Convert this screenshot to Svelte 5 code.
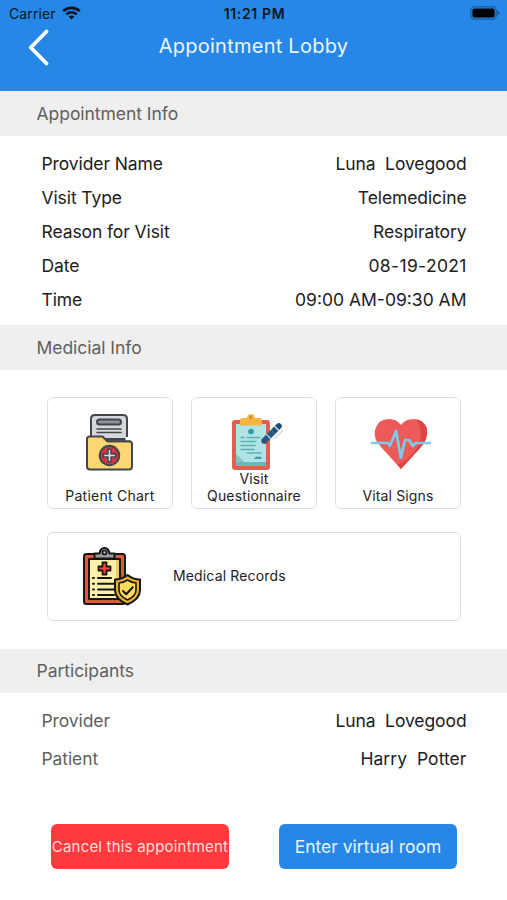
<script>
  const details = [
    { label: 'Provider Name', value: 'Luna  Lovegood' },
    { label: 'Visit Type', value: 'Telemedicine' },
    { label: 'Reason for Visit', value: 'Respiratory' },
    { label: 'Date', value: '08-19-2021', numeric: true },
    { label: 'Time', value: '09:00 AM-09:30 AM' }
  ];
  const people = [
    { label: 'Provider', value: 'Luna  Lovegood' },
    { label: 'Patient', value: 'Harry  Potter' }
  ];
</script>

<main>
  <header>
    <div class="status">
      <div class="carrier">
        <span>Carrier</span>
        <svg width="19" height="14" viewBox="0 0 19 14" fill="none" stroke="#071522">
          <path d="M1.2 5.1C5.8.7 13.2.7 17.8 5.1" stroke-width="2.7" />
          <path d="M4.3 8.3c2.9-2.8 7.5-2.8 10.4 0" stroke-width="2.5" />
          <path d="M9.5 13.4 6.6 10.5c1.6-1.5 4.2-1.5 5.8 0z" fill="#071522" stroke="none" />
        </svg>
      </div>
      <span class="clock">11:21 PM</span>
      <svg class="battery" width="30" height="14" viewBox="0 0 30 14">
        <rect x=".8" y=".8" width="25.4" height="12.4" rx="3.8" fill="none" stroke="#195b9c" stroke-width="1.3" />
        <rect x="2.4" y="2.5" width="22.2" height="9" rx="2" fill="#000" />
        <path d="M27.4 4.7q2.2.6 2.2 2.3t-2.2 2.3z" fill="#195b9c" />
      </svg>
    </div>
    <div class="nav">
      <svg width="22" height="38" viewBox="0 0 22 38" fill="none" stroke="#fff" stroke-width="3.8" stroke-linecap="round" stroke-linejoin="round">
        <path d="M18.5 2.500 2.800 18.500l15.700 16" />
      </svg>
      <h1>Appointment Lobby</h1>
    </div>
  </header>

  <h2>Appointment Info</h2>
  <dl class="details">
    {#each details as { label, value, numeric }}
      <div><dt>{label}</dt><dd class:numeric>{value}</dd></div>
    {/each}
  </dl>

  <h2>Medicial Info</h2>
  <section class="tools">
    <div class="cards">
      <button class="card">
        <svg width="50" height="60" viewBox="0 0 50 60" stroke="#41464a" stroke-width="2" stroke-linejoin="round" stroke-linecap="round">
          <path d="M6 25V7q0-4 4-4h28q4 0 4 4v20H6z" fill="#d5d7dc" />
          <rect x="12" y="7.500" width="24" height="5" rx="2.500" fill="#8c9299" />
          <path d="M12 17h24M12 20.500h24" stroke-width="1.600" />
          <path d="M2 27q0-2.500 2.500-2.500h13l4.800 4.800H44q3 0 3 3v22.200q0 3-3 3H5q-3 0-3-3z" fill="#fcd772" />
          <path d="M42 25v4" stroke="#fff" stroke-width="3" stroke-linecap="butt" />
          <path d="M22.300 29.300H44" />
          <circle cx="24.500" cy="43.500" r="9.700" fill="#d03446" stroke-width="2" />
          <path d="M23 37.300h3v4.700h4.700v3H26v4.700h-3V45h-4.700v-3H23z" fill="#d6dbe0" stroke-width="1.500" />
        </svg>
        <span>Patient Chart</span>
      </button>
      <button class="card visit">
        <svg width="52" height="58" viewBox="0 0 52 58">
          <rect x="1" y="7" width="38" height="50" rx="3" fill="#e45d51" />
          <path d="M5 11h30v41H13l-8-8z" fill="#b0e3e4" />
          <path d="M5 49h30v4H5z" fill="#67b9bf" />
          <path d="M5 41l8 8v4H5z" fill="#67b9bf" />
          <path d="M5 41l8 8H5z" fill="#93bdc0" />
          <path d="M9 7q0-2 3-2h4q0-4 3.800-4t3.800 4h4.400q3 0 3 2v5.500H9z" fill="#f7b442" />
          <circle cx="19.800" cy="4.500" r="1.400" fill="#cb8932" />
          <circle cx="20" cy="18.500" r="2.800" fill="#359aa8" />
          <path d="M9.500 24.500h4m2 0h14M9.500 28.500h16m-16 4h15m-15 4h14m-8 3.500h15" stroke="#5eb0b9" stroke-width="1.500" />
          <path d="M23.500 45.500q3-3 4-1l2.500-.5v1.500z" fill="#409fa9" stroke="#409fa9" />
          <g transform="rotate(-45 40 21)">
            <path d="M29 18h14v6H29l-2-3z" fill="#285780" />
            <path d="M36.500 18v6" stroke="#d4e3ef" stroke-width="1.200" />
            <path d="M43 18h8q3 0 3 3t-3 3h-8z" fill="#214d76" />
            <path d="M48 18v6" stroke="#d4e3ef" stroke-width="1.500" />
            <path d="M39 27h11v-2" stroke="#cbd3da" stroke-width="1.200" fill="none" />
          </g>
        </svg>
        <span>Visit<br />Questionnaire</span>
      </button>
      <button class="card vital">
        <svg width="62" height="60" viewBox="0 0 62 60">
          <path d="M31 57 11 35Q3 27 5 18 8 7 19 7q8 0 12 6 4-6 13-6 11 1 13 11 1 9-6 17z" fill="#ec5b59" />
          <path d="M49 8q7 3 8 10 1 9-6 17L31 57l-4-4.500q13-4 20-17 8-17-1-28z" fill="#dd4444" />
          <path d="M2 31h16l1.800 3 6.300-15 4.800 27L35 28h2.500q3 0 3.300 3l2.200 3 2.500-3H60" fill="none" stroke="#79cdea" stroke-width="2.700" stroke-linecap="round" stroke-linejoin="round" />
        </svg>
        <span>Vital Signs</span>
      </button>
    </div>
    <button class="records">
      <svg width="60" height="60" viewBox="0 0 60 60" stroke="#161515" stroke-width="2" stroke-linejoin="round" stroke-linecap="round">
        <rect x="2" y="8" width="41" height="50" rx="2.500" fill="#d95b3c" />
        <path d="M7 13h31v40H7z" fill="#fff0aa" />
        <path d="M34 14h3v38h-3z" fill="#e9cd69" stroke="none" />
        <path d="M12.500 12.500V7.500h5q1-5.500 5-5.500t5 5.500h5v5z" fill="#9b9ea2" />
        <circle cx="22.500" cy="6.500" r="2" fill="#c8cbce" stroke-width="1.700" />
        <path d="M20.500 16.500h4v4h4v4h-4v4h-4v-4h-4v-4h4z" fill="#ef4a3d" stroke-width="1.800" />
        <path d="M11 32h1m4 0h13M11 37.700h1m4 0h16M11 43.400h1m4 0h16M11 49h1m4 0h16" stroke-width="2" />
        <path d="M45.500 29Q51 33.500 58 33.500V44q0 9-12.500 14.500Q33 53 33 44V33.500q7 0 12.500-4.500z" fill="#e8b331" />
        <path d="M45.500 34q4.500 3 8.500 3v7q0 6-8.500 10Q37 50 37 44v-7q4 0 8.500-3z" fill="#ffdc63" stroke-width="1.600" />
        <path d="M41 45l3.200 3.200 6.500-7" fill="none" stroke-width="2" />
      </svg>
      <span>Medical Records</span>
    </button>
  </section>

  <h2 class="last">Participants</h2>
  <dl class="people">
    {#each people as { label, value }}
      <div><dt>{label}</dt><dd>{value}</dd></div>
    {/each}
  </dl>

  <footer>
    <button class="cancel">Cancel this appointment</button>
    <button class="enter">Enter virtual room</button>
  </footer>
</main>

<style>
  :global(body) { background: #fff; }
  main {
    width: 507px;
    height: 900px;
    overflow: hidden;
    background: #fff;
    color: #202020;
    font-family: Inter, "Liberation Sans", sans-serif;
    font-size: 17.500px;
  }
  h1, h2, dl, dd { margin: 0; font-weight: 400; }
  button { border: 0; padding: 0; font: inherit; color: inherit; }
  svg { display: block; flex: none; }
  header { height: 91px; background: #2787e6; }
  .status {
    height: 27px;
    display: grid;
    grid-template-columns: 1fr auto 1fr;
    align-items: center;
    padding: 0 7px 0 9px;
    color: #071522;
    font-size: 14px;
  }
  .carrier { display: flex; align-items: center; gap: 6px; letter-spacing: 0.1px; }
  .clock { font-weight: 600; font-size: 14px; letter-spacing: 0.650px; }
  .carrier svg { margin-top: -1px; }
  .battery { justify-self: end; margin-top: -1px; }
  .nav {
    display: grid;
    grid-template-columns: 28px 1fr 28px;
    padding: 2px 28px 0;
    height: 38px;
  }
  h1 {
    color: #edf6ff;
    font-size: 20px;
    line-height: 35px;
    letter-spacing: 0.250px;
    text-align: center;
  }
  h2 {
    height: 44.500px;
    line-height: 45px;
    padding-left: 36.500px;
    background: #efefef;
    color: #606060;
    font-size: 17.500px;
    letter-spacing: -0.040px;
  }
  .last { height: 44px; line-height: 44px; }
  dl div { display: flex; justify-content: space-between; padding: 0 40.500px 0 41.500px; }
  dt { letter-spacing: -0.100px; }
  dd { white-space: pre; letter-spacing: -0.100px; }
  .details div:last-child dd { letter-spacing: 0; }
  .details .numeric { letter-spacing: 0.350px; margin-right: -0.350px; }
  .details { height: 189.500px; box-sizing: border-box; padding-top: 11.300px; }
  .details div { line-height: 34px; }
  .tools { height: 279.500px; box-sizing: border-box; padding: 27px 46px 0 47px; }
  .cards { display: grid; grid-template-columns: repeat(3, 126px); gap: 18px; }
  .card, .records {
    box-sizing: border-box;
    border: 1px solid #dedede;
    border-radius: 6px;
    background: #fff;
    color: #222;
    font-size: 14px;
    letter-spacing: 0.150px;
  }
  .card {
    height: 112px;
    display: flex;
    flex-direction: column;
    align-items: center;
    justify-content: space-between;
    padding: 14px 0 4px;
    line-height: 17px;
  }
  .card:first-child { letter-spacing: 0.250px; }
  .visit { padding-top: 15px; }
  .visit svg { margin: 0 0 -3px 5px; }
  .vital { padding-top: 14px; }
  .vital svg { margin-left: 5px; }
  .records {
    width: 414px;
    height: 89.500px;
    margin-top: 23px;
    display: flex;
    align-items: center;
    gap: 31px;
    padding: 0 0 1px 34px;
  }
  .people { padding-top: 8.500px; height: 122.500px; }
  .people div { line-height: 38px; }
  .people dt { color: #606060; }
  .people div:last-child dd { letter-spacing: 0.050px; }
  footer { display: flex; gap: 50px; padding-left: 51px; }
  footer button { width: 178px; height: 44.500px; border-radius: 6px; white-space: nowrap; }
  .cancel { background: #ff3b3d; color: #ffdede; font-size: 15px; letter-spacing: 0.200px; }
  .enter { background: #2787e6; color: #e8f5ff; font-size: 17.500px; }
</style>
